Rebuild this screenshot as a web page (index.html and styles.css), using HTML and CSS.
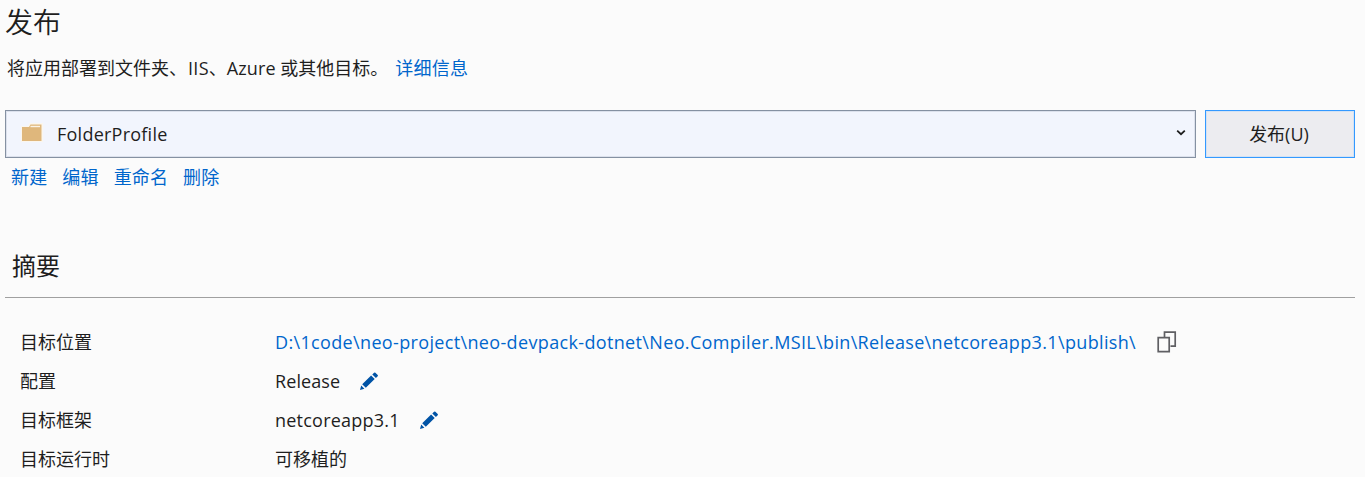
FILE: index.html
```html
<!DOCTYPE html>
<html lang="zh-CN">
<head>
<meta charset="utf-8">
<title>发布</title>
<link rel="stylesheet" href="styles.css">
</head>
<body>
<main class="page">
  <h1 class="title">发布</h1>
  <p class="intro">将应用部署到文件夹、<span class="iis">IIS</span>、<span class="azure">Azure</span> 或其他目标。<a class="link more">详细信息</a></p>
  <div class="toolbar">
    <div class="select">
      <svg class="folder" width="22" height="20" viewBox="0 0 22 20"><path d="M0 3h7l1.500-3H22v19H0z" fill="#fbf6ee"/><path d="M1 4h7l1.500-2.500h11V18H1z" fill="#dfb77c"/><path d="M9.500 3.500h9.500" stroke="#fbf3e6" stroke-width="1.400"/></svg>
      <span class="profile">FolderProfile</span>
      <svg class="chevron" width="10" height="8" viewBox="0 0 10 8"><path d="M1.200 1.700 5 5.200 8.800 1.700" fill="none" stroke="#1e1e1e" stroke-width="1.800"/></svg>
    </div>
    <button class="publish">发布(U)</button>
  </div>
  <nav class="actions"><a class="link">新建</a><a class="link">编辑</a><a class="link">重命名</a><a class="link">删除</a></nav>
  <h2 class="heading">摘要</h2>
  <dl class="summary">
    <dt>目标位置</dt>
    <dd><a class="link path">D:\1code\neo-project\neo-devpack-dotnet\Neo.Compiler.MSIL\bin\Release\netcoreapp3.1\publish\</a>
      <svg class="copy" width="20" height="22" viewBox="0 0 20 22"><path d="M7.500 6V1.200h10.700v14H13.500M1.200 6.700h11v14h-11z" fill="none" stroke="#5f5f63" stroke-width="1.700"/></svg></dd>
    <dt>配置</dt>
    <dd><span class="release">Release</span><svg class="pencil" width="20" height="20" viewBox="0 0 20 20"><path d="M3.200 13.200 12.100 4.500l3.600 3.600-8.900 8.700zM13.300 3.400 15.100 1.700q.6-.6 1.300 0l2.300 2.200q.6.600 0 1.300L16.900 7zM2.200 14.600l3.200 3.200L1 19z" fill="#0053a6"/></svg></dd>
    <dt>目标框架</dt>
    <dd><span class="framework">netcoreapp3.1</span><svg class="pencil" width="20" height="20" viewBox="0 0 20 20"><path d="M3.200 13.200 12.100 4.500l3.600 3.600-8.900 8.700zM13.300 3.400 15.100 1.700q.6-.6 1.300 0l2.300 2.200q.6.600 0 1.300L16.900 7zM2.200 14.600l3.200 3.200L1 19z" fill="#0053a6"/></svg></dd>
    <dt>目标运行时</dt>
    <dd>可移植的</dd>
  </dl>
</main>
</body>
</html>
```
FILE: styles.css
```css
* { box-sizing: border-box; }
body {
  margin: 0;
  height: 477px;
  overflow: hidden;
  background: #fbfbfb;
  color: #1e1e1e;
  font: 18px/24px "Open Sans", "Noto Sans CJK SC", sans-serif;
}
.page { padding: 2px 10px 0 5px; }
.title { margin: 0; font-size: 28px; line-height: 40px; font-weight: 350; }
.intro { margin: 14px 0 0 2px; height: 24px; white-space: nowrap; }
.iis { margin-left: 1px; letter-spacing: 0.3px; }
.azure { letter-spacing: 0.1px; }
.link { color: #0066cc; text-decoration: none; }
.more { margin-left: 7px; letter-spacing: 0.2px; }
.toolbar { display: flex; gap: 9px; height: 48px; margin-top: 30px; }
.select {
  flex: 1;
  display: flex;
  align-items: center;
  padding: 0 9px 0 15px;
  border: 1px solid #8591a2;
  background: #f2f5fd;
  box-shadow: inset 0 0 0 1px #dce1ec;
}
.folder { margin-bottom: 2px; }
.profile { margin-left: 14px; letter-spacing: 0.24px; }
.chevron { margin: 0 0 3px auto; }
.publish {
  width: 150px;
  padding: 0 2px 0 0;
  border: 1px solid #3399ff;
  background: #ececf0;
  box-shadow: inset 0 0 0 1px #d4e2f3;
  color: #1e1e1e;
  font: inherit;
}
.actions { display: flex; gap: 15px; margin: 7px 0 0 6px; height: 24px; letter-spacing: 0.15px; }
.heading {
  margin: 59px 0 0;
  height: 50px;
  padding-left: 7px;
  border-bottom: 1px solid #a0a0a0;
  font-size: 24px;
  line-height: 36px;
  font-weight: 400;
}
.summary {
  display: grid;
  grid-template-columns: 255px 1fr;
  grid-auto-rows: 39px;
  align-items: center;
  margin: 24px 0 0 15px;
}
.summary dd { display: flex; align-items: center; height: 39px; margin: 0; white-space: nowrap; }
.path { letter-spacing: 0.35px; }
.release { letter-spacing: 0.1px; }
.framework { letter-spacing: 0.23px; }
.copy { margin-left: 21px; }
.pencil { margin-left: 19px; }
```
